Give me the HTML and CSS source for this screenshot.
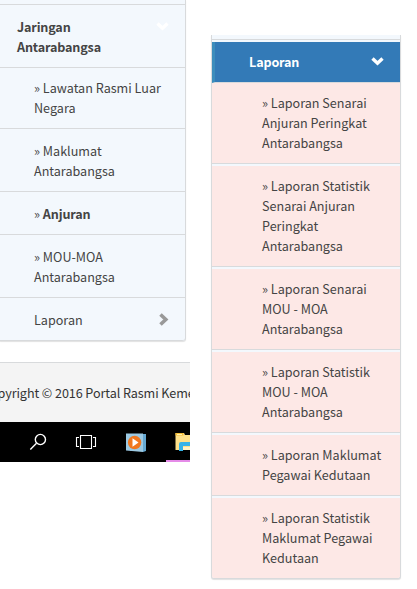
FILE: index.html
```html
<!DOCTYPE html>
<html lang="ms">
<head>
<meta charset="utf-8">
<title>Portal Rasmi</title>
<link rel="stylesheet" href="styles.css">
</head>
<body>
<main class="page">
  <section class="left">
    <nav class="menu">
      <div class="stub"></div>
      <div class="item parent"><b>Jaringan<br>Antarabangsa</b>
        <svg class="arrow" width="13" height="9" viewBox="0 0 13 9"><path d="M1.5 1.5 6.5 6.2 11.5 1.5" fill="none" stroke="#fff" stroke-width="3.4"/></svg>
      </div>
      <div class="item first">» Lawatan Rasmi Luar<br>Negara</div>
      <div class="item">» Maklumat<br>Antarabangsa</div>
      <div class="item">» <b>Anjuran</b></div>
      <div class="item">» MOU-MOA<br>Antarabangsa</div>
      <div class="item">Laporan
        <svg class="arrow next" width="10" height="13" viewBox="0 0 10 13"><path d="M1.5 1.5 6.8 6.5 1.5 11.5" fill="none" stroke="#999" stroke-width="3.6"/></svg>
      </div>
    </nav>
    <footer class="footer"><span>Copyright © 2016 Portal Rasmi Keme</span></footer>
    <div class="taskbar">
      <svg width="190" height="40" viewBox="0 0 190 40">
        <g fill="none" stroke="#fff" stroke-width="1.4">
          <circle cx="40.4" cy="17.5" r="5.1"/><path d="M36.5 21.3 30.3 27.5"/>
          <path d="M80.5 13.5h11v13h-11zM79 15.5h-2.5v9H79M93 15.5h2.5v9H93" stroke-width="1.1"/>
        </g>
        <path d="M128 12h18v17h-16z" fill="#4385b0"/>
        <path d="M143 12h3v17l-3 1z" fill="#66a8d1"/>
        <path d="M126 11.5h17v18.5l-17-1.5z" fill="#9cc9e2"/>
        <circle cx="134.6" cy="20.5" r="6.7" fill="#f07820"/>
        <path d="M132.5 16.2v8.6l6-4.3z" fill="#fff"/>
        <path d="M175.5 11h8.5l1 2h5v15h-14.5z" fill="#fde08a"/>
        <path d="M175.5 11h8v2.500h-8z" fill="#f3bd35"/>
        <path d="M177 12h5v1h-5z" fill="#fff0b0"/>
        <path d="M179 29v-7q0-2 2-2h9v4h-7v5z" fill="#35b3e8"/>
        <path d="M183 25h7v3h-7z" fill="#fff3c4"/>
        <path d="M166 38h24v2h-24z" fill="#e58be8"/>
      </svg>
    </div>
  </section>
  <nav class="report">
    <div class="report-stub"></div>
    <div class="report-head">Laporan
      <svg class="arrow" width="13" height="9" viewBox="0 0 13 9"><path d="M1.5 1.5 6.5 6.2 11.5 1.5" fill="none" stroke="#fff" stroke-width="3.4"/></svg>
    </div>
    <div class="entry">» Laporan Senarai<br>Anjuran Peringkat<br>Antarabangsa</div>
    <div class="entry">» Laporan Statistik<br>Senarai Anjuran<br>Peringkat<br>Antarabangsa</div>
    <div class="entry">» Laporan Senarai<br>MOU - MOA<br>Antarabangsa</div>
    <div class="entry">» Laporan Statistik<br>MOU - MOA<br>Antarabangsa</div>
    <div class="entry">» Laporan Maklumat<br>Pegawai Kedutaan</div>
    <div class="entry">» Laporan Statistik<br>Maklumat Pegawai<br>Kedutaan</div>
  </nav>
</main>
</body>
</html>
```
FILE: styles.css
```css
* { box-sizing: border-box; }
body {
  margin: 0;
  background: #fff;
  color: #444;
  font: 12.6px/20px "Noto Sans CJK SC", "Open Sans", sans-serif;
}
b, .report-head { letter-spacing: -.15px; }
.page {
  display: flex;
  width: 417px;
  height: 589px;
  overflow: hidden;
  white-space: nowrap;
}
.left { width: 190px; margin-right: 21px; }
.menu {
  width: 186px;
  background: #f3f8fd;
  border-right: 1px solid #d8dadc;
  border-bottom-right-radius: 3px;
  box-shadow: 0 1px 1px rgba(0, 0, 0, .12);
}
.stub { height: 5px; border-bottom: 1px solid #d8dadc; }
.item {
  position: relative;
  padding: 12px 0 10px 34px;
  border-bottom: 1px solid #d8dadc;
}
.item:last-child { border-bottom-right-radius: 3px; }
.parent { padding-left: 17px; }
.first { padding-top: 10px; }
.arrow { position: absolute; right: 16px; top: 17px; }
.next { top: 15px; right: 16px; }
.footer {
  display: flex;
  height: 60px;
  margin-top: 21px;
  padding-top: 20px;
  overflow: hidden;
  border-top: 1px solid #d8dadc;
  background: #f4f4f4;
  color: #333;
}
.footer span { margin-left: -18px; letter-spacing: -.08px; }
.taskbar { height: 40px; background: #000; }
.taskbar svg { display: block; }
.report {
  width: 190px;
  height: 544px;
  margin-top: 35px;
  border: solid #d8dadc;
  border-width: 0 1px 1px;
  border-radius: 0 0 3px 3px;
  background: #f3f8fd;
  box-shadow: 0 1px 1px rgba(0, 0, 0, .12);
}
.report-stub { height: 5px; margin-bottom: 2px; border-bottom: 1px solid #d8dadc; }
.report-head {
  position: relative;
  height: 41px;
  padding: 10px 0 0 34px;
  border-left: 3px solid #3c8dbc;
  border-bottom: 1px solid #d8dadc;
  background: #337ab7;
  color: #fff;
  font-weight: bold;
}
.report-head .arrow { top: 15px; right: 16px; }
.entry {
  margin-bottom: 2px;
  padding: 10px 0 10px 50px;
  border-bottom: 1px solid #d8dadc;
  background: #fde8e6;
}
.entry:last-child { margin: 0; border: 0; border-radius: 0 0 2px 2px; }
```
